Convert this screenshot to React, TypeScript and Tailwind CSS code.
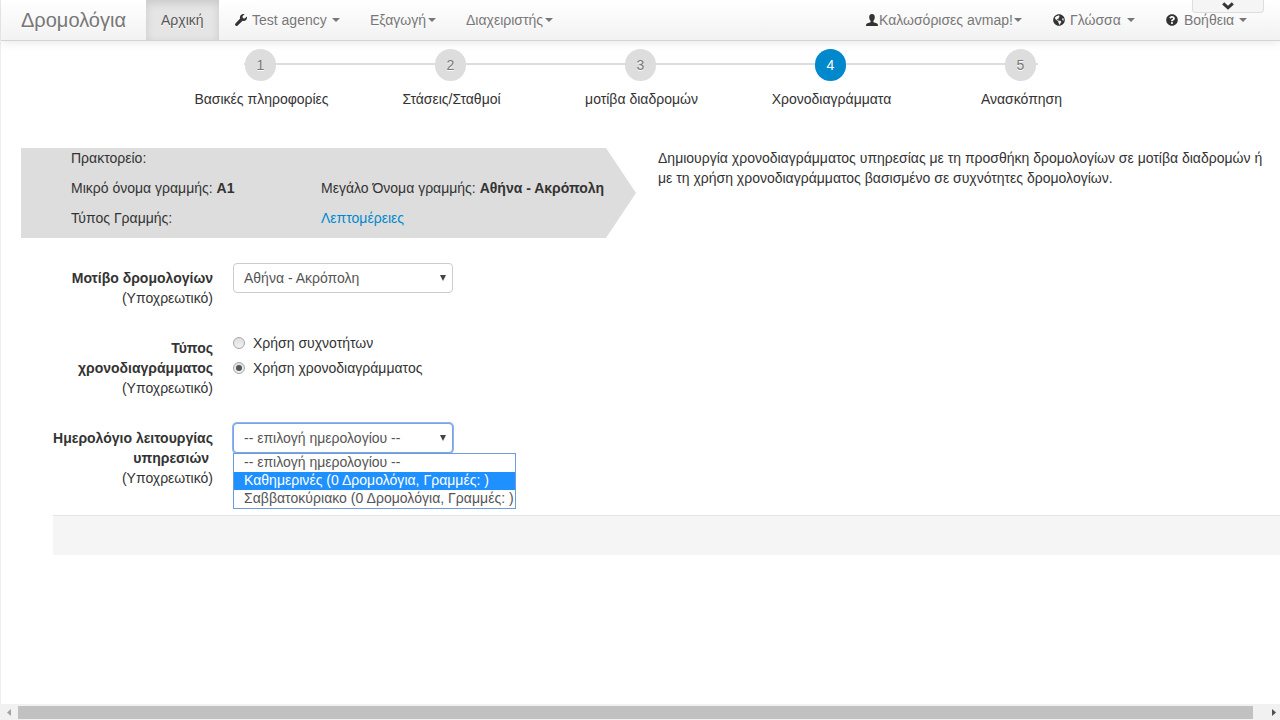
import type { ReactNode } from 'react';
import { FaGlobeAmericas, FaQuestionCircle } from 'react-icons/fa';

const UserIcon = () => (
  <svg width="12" height="12" viewBox="0 0 12 12" fill="#333" className="shrink-0">
    <path d="M6 0C4.3 0 3.2 1.200 3.200 2.900c0 1.600.6 3.100 1.400 3.800v1.200C4.300 8.500 1.500 8.800.6 9.700.1 10.200 0 11.200 0 12h12c0-.8-.1-1.800-.6-2.300-.9-.9-3.700-1.200-4-1.800V6.700c.8-.7 1.400-2.200 1.400-3.800C8.800 1.200 7.700 0 6 0z" />
  </svg>
);

const WrenchIcon = () => (
  <svg width="12" height="12" viewBox="0 0 12 12" fill="#333" className="mr-[5px] ml-px shrink-0">
    <path d="M9.600.2 7.500 2.300l.4 1.900 1.900.3 2-2c.5 1.500.1 2.900-.9 3.700-.9.8-2.200 1-3.300.6L2.700 11.600c-.6.6-1.600.6-2.200 0s-.6-1.600 0-2.200L5.100 4.600C4.700 3.400 5 2 5.900 1.100 6.900.1 8.300-.2 9.600.2z" />
  </svg>
);

const Caret = ({ className = '' }: { className?: string }) => (
  <span className={`h-0 w-0 shrink-0 border-x-4 border-t-4 border-x-transparent border-t-[#777] ${className}`} />
);

const NavItem = ({ className, children }: { className: string; children: ReactNode }) => (
  <a className={`flex h-10 shrink-0 items-center whitespace-nowrap pl-[15px] text-[#777] [text-shadow:0_1px_0_#fff] ${className}`}>
    {children}
  </a>
);

const steps = ['Βασικές πληροφορίες', 'Στάσεις/Σταθμοί', 'μοτίβα διαδρομών', 'Χρονοδιαγράμματα', 'Ανασκόπηση'];

const Select = ({ value, focused = false }: { value: string; focused?: boolean }) => (
  <div
    className={`flex h-[30px] w-[220px] items-center justify-between rounded-[4px] border bg-white pr-[5px] pl-[10px] text-[#555] ${
      focused ? 'border-[#7ba3e6] shadow-[0_0_0_1px_#8db2f0]' : 'border-[#ccc]'
    }`}
  >
    <span>{value}</span>
    <svg width="8" height="6" viewBox="0 0 8 6" fill="#444"><path d="M1 0h6L4 6z" /></svg>
  </div>
);

const Label = ({ children }: { children: ReactNode }) => (
  <div className="w-[180px] shrink-0 pt-[5px] text-right">
    <div className="font-bold">{children}</div>
    <div>(Υποχρεωτικό)</div>
  </div>
);

const Radio = ({ label, checked = false }: { label: string; checked?: boolean }) => (
  <div className="flex h-5 items-center">
    <span className="flex h-3 w-3 items-center justify-center rounded-full border border-[#a6a6a6] bg-linear-to-b from-[#e0e0e0] to-[#f0f0f0]">
      {checked && <span className="h-1.5 w-1.5 rounded-full bg-[#555]" />}
    </span>
    <span className="ml-2">{label}</span>
  </div>
);

export default function App() {
  return (
    <div className="flex h-[720px] w-[1280px] flex-col overflow-hidden bg-white font-['Liberation_Sans',Arial,sans-serif] text-[14px] leading-5 text-[#333]">
      <div className="flex min-h-0 flex-1 flex-col border-l border-[#eee]">
        <nav className="relative flex h-[41px] shrink-0 border-b border-[#d4d4d4] bg-linear-to-b from-white to-[#f2f2f2] shadow-[0_1px_10px_rgba(0,0,0,0.1)]">
          <a className="flex h-10 w-[145px] items-center pl-5 text-[20px] text-[#777] [text-shadow:0_1px_0_#fff]">Δρομολόγια</a>
          <NavItem className="w-[73px] bg-[#e5e5e5] !text-[#555] shadow-[inset_0_3px_8px_rgba(0,0,0,0.125)]">Αρχική</NavItem>
          <NavItem className="w-[136px]">
            <WrenchIcon />Test agency<Caret className="ml-[5px]" />
          </NavItem>
          <NavItem className="w-24">Εξαγωγή<Caret className="ml-[2px]" /></NavItem>
          <NavItem className="w-[118px]">Διαχειριστής<Caret className="ml-[2px]" /></NavItem>
          <div className="ml-auto flex pr-[18px]">
            <NavItem className="w-[187px]"><UserIcon /><span className="ml-px">Καλωσόρισες avmap!</span><Caret className="ml-px" /></NavItem>
            <NavItem className="w-[112px]">
              <FaGlobeAmericas size={12} color="#333" className="mr-[5px] shrink-0" />Γλώσσα<Caret className="ml-1.5" />
            </NavItem>
            <NavItem className="w-[112px]">
              <FaQuestionCircle size={12} color="#333" className="mr-1.5 ml-px shrink-0" />Βοήθεια<Caret className="ml-[5px]" />
            </NavItem>
          </div>
          <div className="absolute top-0 right-4 flex h-[13px] w-[72px] justify-center rounded-b-[4px] border border-t-0 border-[#ddd] bg-[#f5f5f5] pt-0.5">
            <svg width="12" height="8" viewBox="0 0 12 8" fill="none" stroke="#333" strokeWidth="3"><path d="M1.200 1.300 6 5.800l4.800-4.500" /></svg>
          </div>
        </nav>

        <div className="relative mt-2 ml-[164px] grid w-[950px] shrink-0 grid-cols-5">
          <div className="absolute top-[14px] left-[79px] h-0.5 w-[794px] bg-[#ddd]" />
          {steps.map((s, i) => (
            <div key={s} className="relative flex flex-col items-center">
              <div
                className={`flex h-8 w-[31px] items-center justify-center rounded-full pl-px ${
                  i === 3 ? 'bg-[#08c] text-white' : 'bg-[#ddd] text-[#777] [text-shadow:0_1px_0_#fff]'
                }`}
              >
                {i + 1}
              </div>
              <div className="mt-2 pl-[3px] whitespace-nowrap">{s}</div>
            </div>
          ))}
        </div>

        <div className="mt-[39px] ml-5 flex shrink-0">
          <div className="grid h-[90px] w-[615px] grid-cols-[250px_1fr] grid-rows-3 whitespace-nowrap bg-[#ddd] pl-[50px] [clip-path:polygon(0_0,585px_0,100%_50%,585px_100%,0_100%)]">
            <div>Πρακτορείο:</div>
            <div />
            <div>Μικρό όνομα γραμμής: <b>A1</b></div>
            <div>Μεγάλο Όνομα γραμμής: <b>Αθήνα - Ακρόπολη</b></div>
            <div>Τύπος Γραμμής:</div>
            <a className="text-[#08c]">Λεπτομέρειες</a>
          </div>
          <p className="ml-[22px] whitespace-nowrap">
            Δημιουργία χρονοδιαγράμματος υπηρεσίας με τη προσθήκη δρομολογίων σε μοτίβα διαδρομών ή
            <br />
            με τη χρήση χρονοδιαγράμματος βασισμένο σε συχνότητες δρομολογίων.
          </p>
        </div>

        <form className="mt-[25px] flex shrink-0 flex-col pl-8">
          <div className="flex h-[70px] gap-5">
            <Label>Μοτίβο δρομολογίων</Label>
            <Select value="Αθήνα - Ακρόπολη" />
          </div>
          <div className="flex h-[90px] gap-5">
            <Label>Τύπος<br />χρονοδιαγράμματος</Label>
            <div className="flex flex-col gap-[5px]">
              <Radio label="Χρήση συχνοτήτων" />
              <Radio label="Χρήση χρονοδιαγράμματος" checked />
            </div>
          </div>
          <div className="flex h-[92px] gap-5">
            <Label>Ημερολόγιο λειτουργίας<br />υπηρεσιών&nbsp;</Label>
            <div className="relative">
              <Select value="-- επιλογή ημερολογίου --" focused />
              <div className="absolute top-[30px] left-0 w-[283px] border border-[#6f9bd8] bg-white text-[#555]">
                <div className="flex h-[18px] items-center pb-0.5 pl-[10px] whitespace-nowrap">-- επιλογή ημερολογίου --</div>
                <div className="flex h-[18px] items-center bg-[#1e90ff] pb-0.5 pl-[10px] tracking-[0.02px] whitespace-nowrap text-white">Καθημερινές (0 Δρομολόγια, Γραμμές: )</div>
                <div className="flex h-[18px] items-center pb-0.5 pl-[10px] tracking-[0.03px] whitespace-nowrap">Σαββατοκύριακο (0 Δρομολόγια, Γραμμές: )</div>
              </div>
            </div>
          </div>
          <div className="ml-5 h-10 border-t border-[#e5e5e5] bg-[#f5f5f5]" />
        </form>
      </div>

      <div className="flex h-4 shrink-0 items-center bg-[#f1f1f1]">
        <svg width="18" height="16" viewBox="0 0 18 16" fill="#a3a3a3"><path d="M11 5v7L7 8.500z" /></svg>
        <div className="mt-px h-[13px] w-[1235px] bg-[#c1c1c1]" />
        <svg width="27" height="16" viewBox="0 0 27 16" fill="#505050"><path d="M19 5v7l4-3.500z" /></svg>
      </div>
    </div>
  );
}
